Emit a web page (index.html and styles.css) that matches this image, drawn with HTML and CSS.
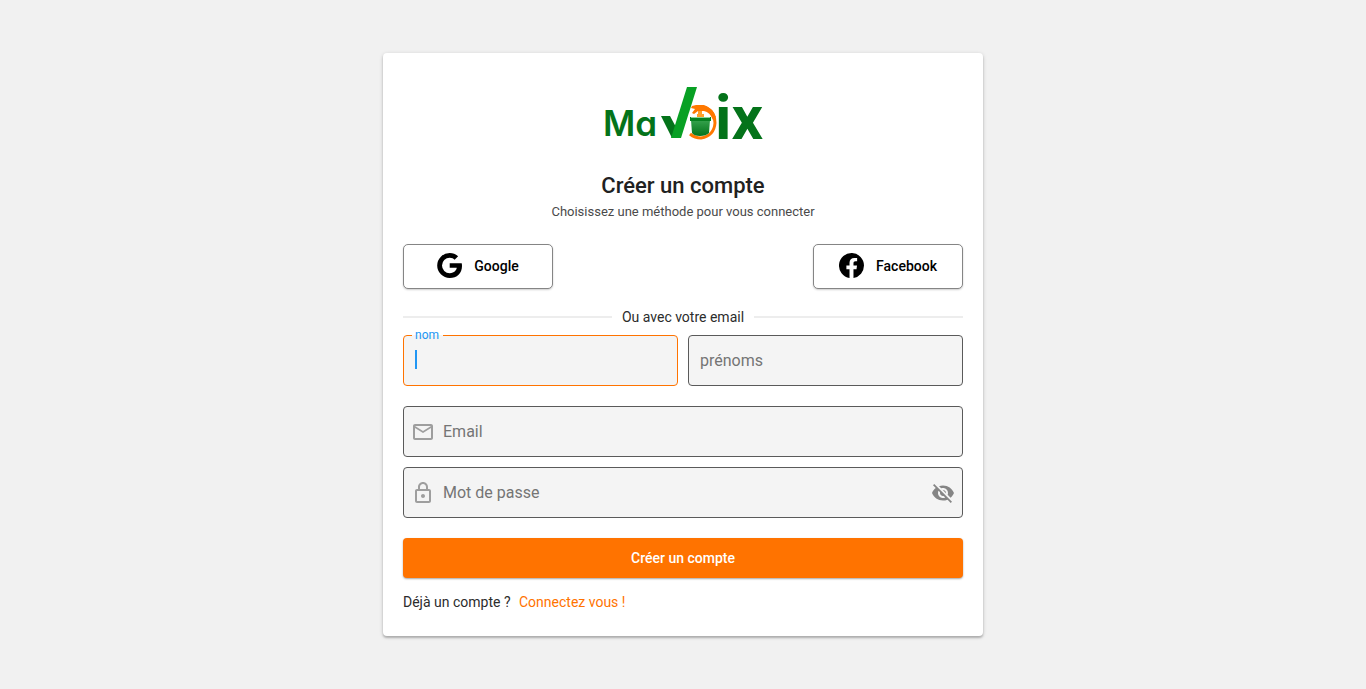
FILE: index.html
```html
<!DOCTYPE html>
<html lang="fr">
<head>
<meta charset="utf-8">
<meta name="viewport" content="width=device-width, initial-scale=1">
<title>Ma Voix - Créer un compte</title>
<link rel="stylesheet" href="styles.css">
</head>
<body>
<main class="card">
  <svg class="logo" viewBox="-4 -4 164 76" role="img" aria-label="Ma Voix">
    <defs>
      <linearGradient id="bin" x1="0" y1="0" x2="0" y2="1">
        <stop offset="0" stop-color="#36a24d"/>
        <stop offset="1" stop-color="#04731a"/>
      </linearGradient>
    </defs>
    <text class="logo-ma" x="-2" y="51">Ma</text>
    <path fill="#04731a" d="M56 31h9l7 13-3 9h-2z"/>
    <path fill="#08a024" d="M82 2h10L76 53H66z"/>
    <path fill="none" stroke="#ff7800" stroke-width="3" d="M100 22q10 5 10 16q-1 13-14 15q-6 0-11-4"/>
    <path fill="#ff7800" d="M86 23l1-2 4-1 8 0q9 3 12 12l-3 3q-3-8-9-9l-6 0-4 3-2-1 3-4z"/>
    <path fill="#ffa02b" d="M93 26h4v3h2v3h-7v-3h1z"/>
    <path fill="url(#bin)" d="M86 35h19l-1 13q-3 3-9 3t-8-3z"/>
    <path fill="#078020" d="M85 32h21v4H85z"/>
    <path fill="#8ed39a" d="M86 32h19v1H86z"/>
    <text class="logo-ix" x="110" y="54">ix</text>
  </svg>

  <h1 class="title">Créer un compte</h1>
  <p class="subtitle">Choisissez une méthode pour vous connecter</p>

  <div class="providers">
    <button class="provider" type="button">
      <svg class="provider-icon" viewBox="0 0 25 25" aria-hidden="true">
        <path d="M12.700 10.200h12q.3 1.400.3 2.700C25 20 20 25 12.700 25A12.500 12.500 0 1 1 12.700 0c3.400 0 6.200 1.200 8.400 3.300l-3.500 3.400c-1-.9-2.600-1.900-4.900-1.900a7.700 7.700 0 0 0 0 15.400c4.900 0 6.800-3.500 7.100-5.400h-7.100z"/>
      </svg>
      Google
    </button>
    <button class="provider" type="button">
      <svg class="provider-icon" viewBox="0 0 24 24" aria-hidden="true">
        <path d="M24 12A12 12 0 1 0 10.100 23.900v-8.400H7.100V12h3V9.400c0-3 1.800-4.700 4.600-4.700 1.300 0 2.700.2 2.700.2v3h-1.500c-1.500 0-2 .9-2 1.900V12h3.400l-.5 3.500h-2.900v8.400A12 12 0 0 0 24 12z"/>
      </svg>
      Facebook
    </button>
  </div>

  <div class="divider">Ou avec votre email</div>

  <form class="form">
    <div class="names">
      <div class="field field-active">
        <label class="float-label" for="nom">nom</label>
        <span class="caret"></span>
        <input class="input" id="nom" type="text">
      </div>
      <div class="field">
        <input class="input" id="prenoms" type="text" placeholder="prénoms" aria-label="prénoms">
      </div>
    </div>
    <div class="field">
      <svg class="field-icon" viewBox="0 0 24 24" aria-hidden="true"><path d="M22 6c0-1.100-.9-2-2-2H4c-1.100 0-2 .9-2 2v12c0 1.100.9 2 2 2h16c1.100 0 2-.9 2-2V6zm-2 0l-8 5-8-5h16zm0 12H4V8l8 5 8-5v10z"/></svg>
      <input class="input" id="email" type="email" placeholder="Email" aria-label="Email">
    </div>
    <div class="field">
      <svg class="field-icon" viewBox="0 0 24 24" aria-hidden="true"><path d="M18 8h-1V6c0-2.760-2.240-5-5-5S7 3.240 7 6v2H6c-1.100 0-2 .9-2 2v10c0 1.100.9 2 2 2h12c1.100 0 2-.9 2-2V10c0-1.100-.9-2-2-2zM9 6c0-1.660 1.340-3 3-3s3 1.340 3 3v2H9V6zm9 14H6V10h12v10zm-6-3c1.100 0 2-.9 2-2s-.9-2-2-2-2 .9-2 2 .9 2 2 2z"/></svg>
      <input class="input" id="password" type="password" placeholder="Mot de passe" aria-label="Mot de passe">
      <button class="reveal" type="button" aria-label="Afficher le mot de passe">
        <svg class="field-icon eye" viewBox="0 0 24 24" aria-hidden="true"><path d="M12 7c2.760 0 5 2.240 5 5 0 .65-.13 1.260-.36 1.830l2.920 2.920c1.510-1.260 2.700-2.890 3.430-4.750-1.730-4.390-6-7.500-11-7.500-1.400 0-2.740.25-3.980.7l2.160 2.160C10.740 7.130 11.350 7 12 7zM2 4.270l2.280 2.280.46.46C3.080 8.300 1.780 10.020 1 12c1.730 4.390 6 7.500 11 7.500 1.550 0 3.030-.3 4.380-.84l.42.42L19.730 22 21 20.730 3.270 3 2 4.270zM7.530 9.800l1.550 1.550c-.05.21-.08.43-.08.65 0 1.660 1.340 3 3 3 .22 0 .44-.03.65-.08l1.550 1.550c-.67.33-1.410.53-2.200.53-2.760 0-5-2.240-5-5 0-.79.2-1.530.53-2.200zm4.310-.78l3.150 3.150.02-.16c0-1.660-1.340-3-3-3l-.17.01z"/></svg>
      </button>
    </div>
    <button class="submit" type="submit">Créer un compte</button>
  </form>

  <p class="signin">Déjà un compte ? <a class="link" href="#">Connectez vous !</a></p>
</main>
</body>
</html>
```
FILE: styles.css
```css
* {
  box-sizing: border-box;
}

body {
  margin: 0;
  min-height: 100vh;
  display: flex;
  align-items: center;
  justify-content: center;
  background: #f1f1f1;
  color: #2c2c2c;
  font-family: Roboto, "Liberation Sans", sans-serif;
  font-size: 14px;
  line-height: 20px;
}

button,
input {
  font: inherit;
}

button {
  cursor: pointer;
}

.card {
  width: 100%;
  max-width: 600px;
  padding: 28px 20px 24px;
  display: flex;
  flex-direction: column;
  background: #fff;
  border-radius: 4px;
  box-shadow: 0 2px 2px rgba(0, 0, 0, .2), 0 1px 4px rgba(0, 0, 0, .16);
}

.logo {
  width: 164px;
  height: 76px;
  align-self: center;
}

.logo-ma {
  font: 600 35px Inter, sans-serif;
  font-feature-settings: "cv11";
  fill: #04731a;
}

.logo-ix {
  font: 700 62px Roboto, sans-serif;
  fill: #04731a;
}

.title {
  margin: 15px 0 0;
  text-align: center;
  font-size: 22px;
  line-height: 28px;
  font-weight: 500;
  color: #212121;
}

.subtitle {
  margin: 2px 0 0;
  text-align: center;
  font-size: 13px;
  color: #4a4a4a;
}

.providers {
  margin-top: 22px;
  display: flex;
  justify-content: space-between;
}

.provider {
  width: 150px;
  height: 45px;
  padding: 0;
  display: flex;
  align-items: center;
  justify-content: center;
  gap: 12px;
  border: 1px solid #858585;
  border-radius: 5px;
  background: #fff;
  color: #000;
  font-weight: 500;
  line-height: 21px;
  box-shadow: 0 1px 2px rgba(0, 0, 0, .2);
}

.provider-icon {
  width: 25px;
  height: 25px;
  margin-bottom: 2px;
}

.divider {
  margin-top: 18px;
  display: flex;
  align-items: center;
  gap: 10px;
}

.divider::before,
.divider::after {
  content: "";
  flex: 1;
  height: 2px;
  background: #ededed;
}

.form {
  margin-top: 8px;
  display: flex;
  flex-direction: column;
  gap: 10px;
}

.names {
  display: grid;
  grid-template-columns: 1fr 1fr;
  gap: 10px;
  margin-bottom: 10px;
}

.field {
  position: relative;
  height: 51px;
  padding: 0 7px;
  display: flex;
  align-items: center;
  border: 1px solid #5a5a5a;
  border-radius: 4px;
  background: #f4f4f4;
}

.field-active {
  border-color: #ff7300;
}

.float-label {
  position: absolute;
  top: -8px;
  left: 8px;
  padding: 0 4px 0 3px;
  background: linear-gradient(#fff 7px, #f4f4f4 7px);
  color: #2196f3;
  font-size: 12px;
  line-height: 14px;
}

.caret {
  position: absolute;
  top: 14px;
  left: 11px;
  width: 2px;
  height: 19px;
  background: #2196f3;
}

.input {
  flex: 1;
  min-width: 0;
  height: 48px;
  padding: 0 4px;
  border: 0;
  outline: 0;
  background: transparent;
  color: #212121;
  font-size: 16px;
}

.input::placeholder {
  color: #757575;
  opacity: 1;
}

.field-icon + .input {
  padding-left: 8px;
}

.field-icon {
  display: block;
  flex: none;
  width: 24px;
  height: 24px;
  fill: #9e9e9e;
}

.eye {
  fill: #858585;
}

.reveal {
  padding: 0;
  border: 0;
  background: none;
}

.submit {
  height: 40px;
  margin-top: 10px;
  border: 0;
  border-radius: 4px;
  background: #ff7300;
  color: #fff;
  font-weight: 500;
  box-shadow: 0 1px 2px rgba(0, 0, 0, .35);
}

.signin {
  margin: 14px 0 0;
}

.link {
  margin-left: 5px;
  color: #ff7300;
  text-decoration: none;
}
```
